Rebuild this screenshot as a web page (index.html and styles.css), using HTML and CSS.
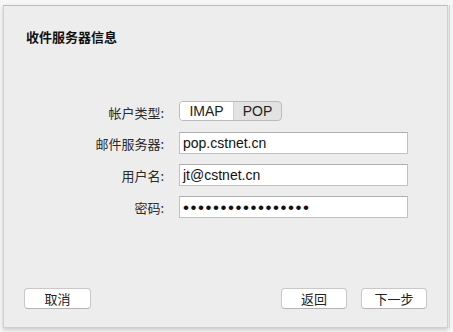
FILE: index.html
```html
<!DOCTYPE html>
<html>
  <head>
    <meta charset="UTF-8" />
    <title>收件服务器信息</title>
    <link rel="stylesheet" href="styles.css">
  </head>

  <body>
    <div class="backdrop">
      <div class="sheet">
        <div class="sheet-title">收件服务器信息</div>
        <div class="form">
          <div class="label">帐户类型:</div>
          <div class="segmented">
            <div class="seg seg-on">IMAP</div>
            <div class="seg">POP</div>
          </div>
          <div class="label">邮件服务器:</div>
          <div class="field">pop.cstnet.cn</div>
          <div class="label">用户名:</div>
          <div class="field">jt@cstnet.cn</div>
          <div class="label">密码:</div>
          <div class="field field-secret">•••••••••••••••••</div>
        </div>
        <div class="footer">
          <div class="btn">取消</div>
          <div class="footer-right">
            <div class="btn">返回</div>
            <div class="btn">下一步</div>
          </div>
        </div>
      </div>
      <div class="behind"></div>
    </div>
  </body>
</html>
```

FILE: styles.css
```css
html,
body {
  margin: 0;
  height: 100%;
  background: #f6f6f6;
  font-family: 'Liberation Sans', 'Noto Sans CJK SC', sans-serif;
  color: #222;
}

.backdrop {
  display: flex;
  height: 332px;
  padding: 5px 0 4px 3px;
  box-sizing: border-box;
}

.sheet {
  width: 445px;
  display: flex;
  flex-direction: column;
  background: #ededed;
  border: 1px solid #cfcfcf;
  border-top-color: #bdbdbd;
  box-sizing: border-box;
  box-shadow: 0 2px 4px rgba(0, 0, 0, 0.18);
}

.behind {
  flex: 1;
  border-left: 1px solid #d6d6d6;
  margin-left: 1px;
  background: #f3f3f3;
}

.sheet-title {
  margin: 22px 0 0 22px;
  font-family: 'Noto Sans CJK SC', sans-serif;
  font-size: 13px;
  font-weight: bold;
  line-height: 18px;
  color: #111;
}

.form {
  display: grid;
  grid-template-columns: 160px 229px;
  grid-template-rows: 20px 22px 22px 22px;
  column-gap: 15px;
  row-gap: 10px;
  align-items: center;
  margin-top: 56px;
}

.label {
  text-align: right;
  font-family: 'Noto Sans CJK SC', sans-serif;
  font-size: 13px;
  color: #2a2a2a;
}

.segmented {
  display: flex;
  width: 103px;
  height: 20px;
  margin-top: -2px;
  border: 1px solid #bcbcbc;
  border-radius: 4px;
  box-sizing: border-box;
  overflow: hidden;
  background: #e2e2e2;
}

.seg {
  flex: 1;
  text-align: center;
  font-size: 14px;
  line-height: 18px;
  color: #222;
}

.seg-on {
  flex: 0 0 53px;
  background: #fff;
  border-right: 1px solid #d0d0d0;
}

.field {
  height: 22px;
  padding-left: 3px;
  border: 1px solid #c2c2c2;
  border-top-color: #b0b0b0;
  background: #fff;
  box-sizing: border-box;
  font-size: 14px;
  line-height: 20px;
  color: #111;
}

.field-secret {
  font-size: 17px;
  letter-spacing: 1.55px;
  line-height: 21px;
}

.footer {
  display: flex;
  justify-content: space-between;
  margin: auto 20px 18px 20px;
}

.footer-right {
  display: flex;
  gap: 14px;
}

.btn {
  width: 66px;
  height: 21px;
  border: 1px solid #c8c8c8;
  border-bottom-color: #b4b4b4;
  border-radius: 4px;
  background: #fff;
  box-sizing: border-box;
  text-align: center;
  font-family: 'Noto Sans CJK SC', sans-serif;
  font-size: 13px;
  line-height: 19px;
  color: #222;
}

.footer > .btn {
  width: 67px;
}
```
